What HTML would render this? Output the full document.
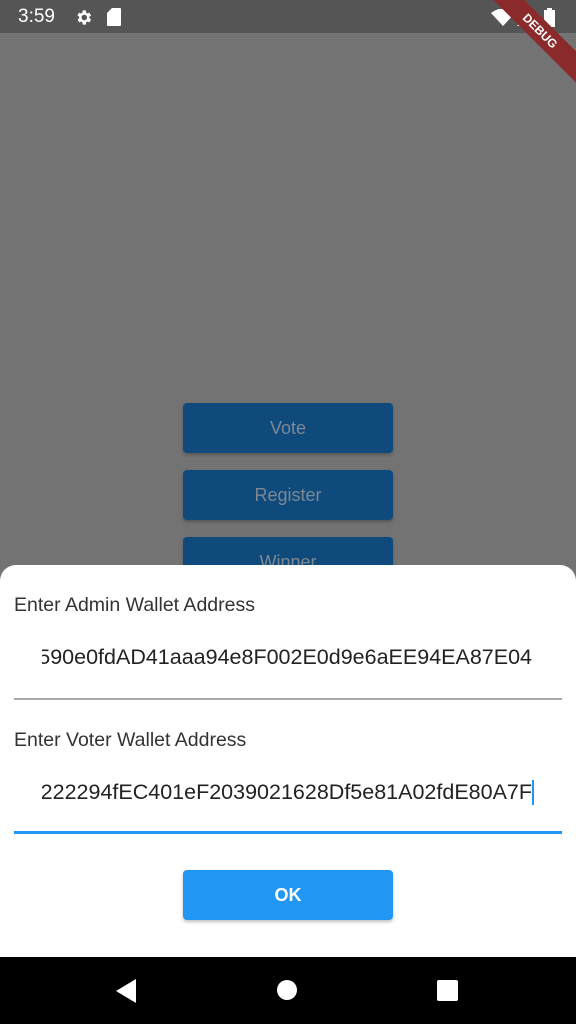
<!DOCTYPE html>
<html><head><meta charset="utf-8"><style>
*{margin:0;padding:0;box-sizing:border-box}
body{width:576px;height:1024px;position:relative;overflow:hidden;background:#737373;font-family:"Liberation Sans",Roboto,sans-serif}
.status{position:absolute;left:0;top:0;width:576px;height:33px;background:#555}
.time{position:absolute;left:18px;top:6px;color:#fff;font-size:19px}
.btn{position:absolute;left:183px;width:210px;height:50px;background:#0f4a7c;border-radius:4px;color:#7d8893;font-size:18px;text-align:center;line-height:50px;box-shadow:0 2px 3px rgba(0,0,0,.25)}
.sheet{position:absolute;left:0;top:565px;width:576px;height:392px;background:#fff;border-radius:16px 16px 0 0}
.lbl{position:absolute;left:14px;font-size:19.5px;color:#333}
.fld{position:absolute;left:42px;width:490px;overflow:hidden;white-space:nowrap;font-size:21.5px;color:#222;direction:rtl;text-align:left}
.fld span{direction:ltr;unicode-bidi:bidi-override}
.line{position:absolute;left:14px;width:548px}
.ok{position:absolute;left:183px;top:870px;width:210px;height:50px;background:#2196f3;border-radius:4px;color:#fff;font-size:18px;font-weight:bold;text-align:center;line-height:50px;box-shadow:0 2px 3px rgba(0,0,0,.25)}
.nav{position:absolute;left:0;top:957px;width:576px;height:67px;background:#000}
.debug{position:absolute;right:-44px;top:20px;width:160px;height:22px;background:#8b2a2a;transform:rotate(45deg);color:#fff;font-size:12px;font-weight:bold;text-align:center;line-height:22px}
</style></head><body>
<div class="status">
<div class="time">3:59</div>
<svg style="position:absolute;left:74px;top:8px" width="19" height="19" viewBox="0 0 24 24"><path fill="#fff" d="M19.4 13a7.5 7.5 0 000-2l2.1-1.6-2-3.5-2.5 1a7 7 0 00-1.7-1L15 3h-4l-.4 2.9a7 7 0 00-1.7 1l-2.5-1-2 3.5L6.6 11a7.5 7.5 0 000 2l-2.1 1.6 2 3.5 2.5-1a7 7 0 001.7 1L11 21h4l.4-2.9a7 7 0 001.7-1l2.5 1 2-3.5zM13 15.5a3.5 3.5 0 110-7 3.5 3.5 0 010 7z"/></svg>
<svg style="position:absolute;left:107px;top:8px" width="14" height="18" viewBox="0 0 14 18"><path fill="#fff" d="M5 0h8a1 1 0 011 1v16a1 1 0 01-1 1H1a1 1 0 01-1-1V5z"/></svg>
<svg style="position:absolute;left:491px;top:9px" width="24" height="17" viewBox="0 0 24 17"><path fill="#fff" d="M0 4Q12-5 24 4L12 17z"/></svg>
<svg style="position:absolute;left:517px;top:10px" width="16" height="16" viewBox="0 0 16 16"><path fill="#fff" d="M16 0V16H0z"/></svg>
<svg style="position:absolute;left:544px;top:8px" width="11" height="19" viewBox="0 0 11 19"><path fill="#fff" d="M3 0h5v2h3v17H0V2h3z"/></svg>
</div>
<div class="debug">DEBUG</div>
<div class="btn" style="top:403px">Vote</div>
<div class="btn" style="top:470px">Register</div>
<div class="btn" style="top:537px">Winner</div>
<div class="sheet"></div>
<div class="lbl" style="top:594px">Enter Admin Wallet Address</div>
<div class="fld" style="top:645px"><span>0x1F590e0fdAD41aaa94e8F002E0d9e6aEE94EA87E04</span></div>
<div class="line" style="top:698px;height:2px;background:#aaa"></div>
<div class="lbl" style="top:729px">Enter Voter Wallet Address</div>
<div class="fld" style="top:780px"><span>0x3222294fEC401eF2039021628Df5e81A02fdE80A7F</span></div>
<div style="position:absolute;left:532px;top:780px;width:2px;height:25px;background:#2196f3"></div>
<div class="line" style="top:831px;height:3px;background:#2196f3"></div>
<div class="ok">OK</div>
<div class="nav">
<svg style="position:absolute;left:116px;top:22px" width="22" height="24" viewBox="0 0 22 24"><path fill="#fff" d="M20 0V24L0 12z"/></svg>
<div style="position:absolute;left:277px;top:23px;width:20px;height:20px;border-radius:50%;background:#fff"></div>
<div style="position:absolute;left:437px;top:23px;width:21px;height:21px;border-radius:2px;background:#fff"></div>
</div>
</body></html>
